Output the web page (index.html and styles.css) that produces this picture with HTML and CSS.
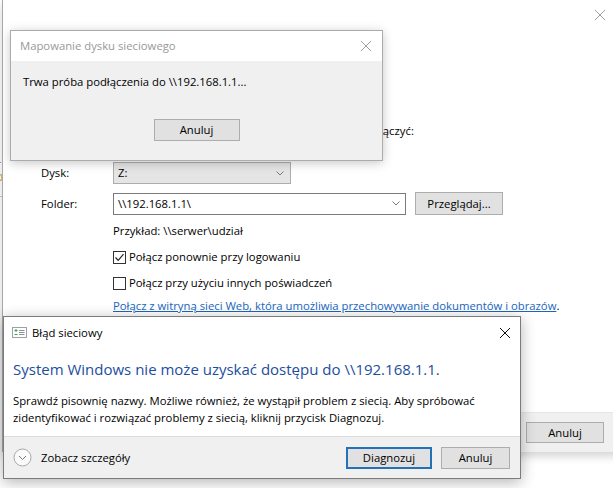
FILE: index.html
```html
<!DOCTYPE html>
<html lang="pl">
<head>
    <meta charset="UTF-8">
    <title>Mapowanie dysku sieciowego</title>
    <link rel="stylesheet" href="styles.css">
</head>
<body>
    <div class="desktop">
        <div class="side-win">
            <span class="frag frag-paren">(</span>
            <span class="frag frag-red">r</span>
            <span class="frag frag-yellow">o</span>
            <span class="side-line"></span>
        </div>

        <div class="main-win">
            <div class="titlebar">
                <span class="caption-btn">
                    <svg width="10" height="10" viewBox="0 0 10 10"><path d="M0 0L10 10M10 0L0 10" stroke="#a0a0a0" stroke-width="1"/></svg>
                </span>
            </div>
            <div class="wizard">
                <p class="wiz-text">Określ literę dysku dla połączenia i folder, z którym chcesz się połączyć:</p>
                <div class="form">
                    <label>Dysk:</label>
                    <div class="combo combo-list">
                        <span>Z:</span>
                        <svg width="8" height="5" viewBox="0 0 8 5"><path d="M0.5 0.5L4 4L7.5 0.5" fill="none" stroke="#7a7a7a"/></svg>
                    </div>
                    <label>Folder:</label>
                    <div class="folder-row">
                        <div class="combo combo-edit">
                            <span>\\192.168.1.1\</span>
                            <svg width="8" height="5" viewBox="0 0 8 5"><path d="M0.5 0.5L4 4L7.5 0.5" fill="none" stroke="#7a7a7a"/></svg>
                        </div>
                        <button class="btn btn-browse">Przeglądaj...</button>
                    </div>
                    <div class="options">
                        <div class="hint">Przykład: \\serwer\udział</div>
                        <div class="check">
                            <span class="box">
                                <svg width="11" height="11" viewBox="0 0 11 11"><path d="M1.5 5.5L4.2 8.3L9.5 2.2" fill="none" stroke="#222" stroke-width="1.2"/></svg>
                            </span>
                            <span>Połącz ponownie przy logowaniu</span>
                        </div>
                        <div class="check">
                            <span class="box"></span>
                            <span>Połącz przy użyciu innych poświadczeń</span>
                        </div>
                        <div class="link-line"><a href="#">Połącz z witryną sieci Web, która umożliwia przechowywanie dokumentów i obrazów</a>.</div>
                    </div>
                </div>
            </div>
            <div class="footer">
                <button class="btn btn-footer">Anuluj</button>
            </div>
        </div>

        <div class="dlg progress">
            <div class="titlebar">
                <span>Mapowanie dysku sieciowego</span>
                <svg width="10" height="10" viewBox="0 0 10 10"><path d="M0 0L10 10M10 0L0 10" stroke="#a0a0a0" stroke-width="1"/></svg>
            </div>
            <div class="body">
                <p class="msg">Trwa próba podłączenia do \\192.168.1.1...</p>
                <div class="btn-row">
                    <button class="btn btn-cancel">Anuluj</button>
                </div>
            </div>
        </div>

        <div class="dlg error">
            <div class="titlebar">
                <svg class="app-icon" width="15" height="11" viewBox="0 0 15 11">
                    <rect x="0.5" y="0.5" width="14" height="10" fill="#fff" stroke="#9aa3a8"/>
                    <path d="M2.5 3.5h3M4 2v3M2.5 7.5h3" stroke="#3fa34d" stroke-width="1"/>
                    <path d="M7 3.5h5.5M7 5.5h5.5M7 7.5h5.5" stroke="#8a949a" stroke-width="1"/>
                </svg>
                <span class="title">Błąd sieciowy</span>
                <svg class="close" width="10" height="10" viewBox="0 0 10 10"><path d="M0 0L10 10M10 0L0 10" stroke="#111" stroke-width="1"/></svg>
            </div>
            <div class="content">
                <h1 class="instruction">System Windows nie może uzyskać dostępu do \\192.168.1.1.</h1>
                <p class="details">Sprawdź pisownię nazwy. Możliwe również, że wystąpił problem z siecią. Aby spróbować zidentyfikować i rozwiązać problemy z siecią, kliknij przycisk Diagnozuj.</p>
            </div>
            <div class="footer">
                <div class="expander">
                    <svg width="19" height="19" viewBox="0 0 19 19"><circle cx="9.5" cy="9.5" r="8.5" fill="#fafafa" stroke="#a8a8a8"/><path d="M6 8l3.5 3.5L13 8" fill="none" stroke="#7a7a7a"/></svg>
                    <span>Zobacz szczegóły</span>
                </div>
                <div class="actions">
                    <button class="btn btn-default">Diagnozuj</button>
                    <button class="btn btn-err-cancel">Anuluj</button>
                </div>
            </div>
        </div>
    </div>
</body>
</html>
```

FILE: styles.css
```css
* { margin: 0; padding: 0; box-sizing: border-box; }
body {
    width: 613px;
    height: 488px;
    overflow: hidden;
    background: #fff;
    font-family: "Open Sans", "Noto Sans", sans-serif;
    font-size: 11.3px;
    line-height: 16px;
    color: #000;
}
.desktop { position: relative; width: 613px; height: 488px; overflow: hidden; background: #fff; }

/* window peeking in on the left */
.side-win { position: absolute; left: 0; top: 0; width: 3px; height: 320px; overflow: hidden; }
.frag { position: absolute; left: -4px; font-size: 12px; line-height: 14px; }
.frag-paren { top: 128px; color: #5a78a8; }
.frag-red { top: 158px; color: #b4462a; }
.frag-yellow { top: 170px; color: #c9a23e; }
.side-line { position: absolute; left: 0; top: 196px; width: 3px; height: 1px; background: #c8c8c8; }

/* main wizard window (behind) */
.main-win {
    position: absolute;
    left: 2px;
    top: 0;
    width: 621px;
    height: 452px;
    background: #fff;
    border-left: 1px solid #a8a8a8;
    box-shadow: 0 4px 9px rgba(0,0,0,0.18);
    display: flex;
    flex-direction: column;
}
.main-win .titlebar { height: 30px; display: flex; justify-content: flex-end; }
.caption-btn { width: 46px; display: flex; align-items: center; justify-content: center; }
.wizard { flex: 1; padding: 93px 0 0 38px; }
.form {
    margin-top: 23px;
    display: grid;
    grid-template-columns: 72px auto;
    row-gap: 8px;
    align-items: center;
    justify-content: start;
}
.combo {
    height: 22px;
    display: flex;
    align-items: center;
    justify-content: space-between;
    padding: 0 6px 0 4px;
}
.combo-list { width: 178px; background: #e5e5e5; border: 1px solid #adadad; }
.combo-edit { width: 293px; background: #fff; border: 1px solid #7a7a7a; padding-right: 5px; }
.folder-row { display: flex; align-items: center; gap: 9px; }
.options { grid-column: 2; display: flex; flex-direction: column; }
.check { display: flex; align-items: center; gap: 3px; margin-top: 10px; }
.box { width: 13px; height: 13px; border: 1px solid #333; background: #fff; display: flex; align-items: center; justify-content: center; }
.link-line { margin-top: 7px; }
.link-line a { color: #1a66c0; text-decoration: underline; }
.main-win .footer {
    height: 40px;
    background: #f0f0f0;
    border-top: 1px solid #e6e6e6;
    display: flex;
    align-items: center;
    justify-content: flex-end;
    padding-right: 19px;
}

/* buttons */
.btn {
    font: inherit;
    color: #000;
    background: #e1e1e1;
    border: 1px solid #adadad;
    height: 22px;
}
.btn-browse { width: 88px; height: 23px; }
.btn-footer { width: 78px; height: 21px; }
.btn-cancel { width: 86px; }
.btn-default { width: 86px; border: 2px solid #2371b6; }
.btn-err-cancel { width: 69px; }

/* dialogs */
.dlg { position: absolute; background: #fff; display: flex; flex-direction: column; }
.progress {
    left: 10px;
    top: 30px;
    width: 373px;
    height: 131px;
    border: 1px solid #ababab;
    box-shadow: 0 2px 10px rgba(0,0,0,0.22);
}
.progress .titlebar {
    height: 30px;
    display: flex;
    align-items: center;
    justify-content: space-between;
    padding: 0 11px 0 9px;
    color: #999;
}
.progress .body { flex: 1; background: #f0f0f0; padding-top: 13px; }
.progress .msg { padding-left: 12px; }
.progress .btn-row { margin-top: 29px; display: flex; justify-content: center; }

.error {
    left: 3px;
    top: 316px;
    width: 518px;
    height: 163px;
    border: 1px solid #7c7c7c;
    box-shadow: 0 3px 14px rgba(0,0,0,0.3);
}
.error .titlebar { height: 31px; display: flex; align-items: center; gap: 5px; padding: 0 10px 0 8px; }
.error .title { flex: 1; }
.error .content { flex: 1; padding: 10px 10px 0 9px; }
.instruction { font-size: 15px; font-weight: normal; line-height: 22px; color: #1c4e9d; }
.details { margin-top: 12px; line-height: 17px; }
.error .footer {
    height: 42px;
    background: #f0f0f0;
    border-top: 1px solid #dcdcdc;
    display: flex;
    align-items: center;
    justify-content: space-between;
    padding: 0 10px 0 9px;
}
.expander { display: flex; align-items: center; gap: 9px; }
.actions { display: flex; gap: 9px; }
```
